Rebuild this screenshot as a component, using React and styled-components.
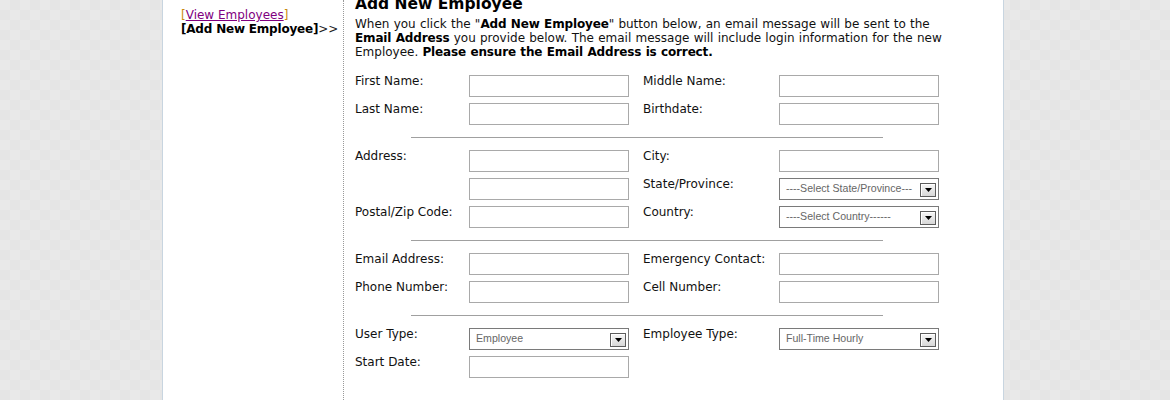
import React from 'react';
import styled, { createGlobalStyle } from 'styled-components';

const GlobalStyle = createGlobalStyle`
  html, body {
    margin: 0;
    padding: 0;
  }

  body {
    background: repeating-conic-gradient(#e5e5e5 0 25%, #e9e9e9 0 50%) 0 0 / 20px 20px;
    font-family: "DejaVu Sans", Verdana, sans-serif;
    font-size: 12px;
    color: #111;
  }
`;

const sections = [
  [
    ['First Name:', 'input', 'Middle Name:', 'input'],
    ['Last Name:', 'input', 'Birthdate:', 'input'],
  ],
  [
    ['Address:', 'input', 'City:', 'input'],
    ['', 'input', 'State/Province:', '----Select State/Province---'],
    ['Postal/Zip Code:', 'input', 'Country:', '----Select Country------'],
  ],
  [
    ['Email Address:', 'input', 'Emergency Contact:', 'input'],
    ['Phone Number:', 'input', 'Cell Number:', 'input'],
  ],
  [
    ['User Type:', 'Employee', 'Employee Type:', 'Full-Time Hourly'],
    ['Start Date:', 'input', '', ''],
  ],
];

function Control({ value }) {
  if (!value) return <span />;
  if (value === 'input') return <TextInput type="text" />;
  return (
    <SelectBox>
      <SelectText>{value}</SelectText>
      <ArrowButton>
        <svg width="7" height="4" viewBox="0 0 7 4">
          <path d="M0 0h7L3.5 4z" fill="#000" />
        </svg>
      </ArrowButton>
    </SelectBox>
  );
}

function App() {
  return (
    <Page>
      <GlobalStyle />
      <Panel>
        <Sidebar>
          <div>
            <Bracket>[</Bracket>
            <NavLink href="#">View Employees</NavLink>
            <Bracket>]</Bracket>
          </div>
          <div>
            <strong>[Add New Employee]</strong>&gt;&gt;
          </div>
        </Sidebar>
        <Main>
          <Heading>Add New Employee</Heading>
          <Intro>
            When you click the "<b>Add New Employee</b>" button below, an email
            message will be sent to the <b>Email Address</b> you provide below.
            The email message will include login information for the new
            Employee. <b>Please ensure the Email Address is correct.</b>
          </Intro>
          <FormGrid>
            {sections.map((rows, i) => (
              <React.Fragment key={i}>
                {i > 0 && <Divider />}
                {rows.map((row, j) => (
                  <React.Fragment key={j}>
                    <Label>{row[0]}</Label>
                    <Control value={row[1]} />
                    <Label $right>{row[2]}</Label>
                    <Control value={row[3]} />
                  </React.Fragment>
                ))}
              </React.Fragment>
            ))}
          </FormGrid>
        </Main>
      </Panel>
    </Page>
  );
}

export default App;

const Page = styled.div`
  min-height: 400px;
  padding-left: 162px;
`;

const Panel = styled.div`
  width: 842px;
  min-height: 400px;
  box-sizing: border-box;
  display: flex;
  background: #fff;
  border-left: 1px solid #c8d5e0;
  border-right: 1px solid #c8d5e0;
`;

const Sidebar = styled.div`
  width: 181px;
  flex-shrink: 0;
  box-sizing: border-box;
  padding: 8px 0 0 18px;
  border-right: 1px dotted #999;
  line-height: 14px;
  color: #222;

  strong {
    color: #000;
    letter-spacing: -0.2px;
  }
`;

const Bracket = styled.span`
  color: #c98a10;
`;

const NavLink = styled.a`
  color: #800080;
  text-decoration: underline;
`;

const Main = styled.div`
  padding-left: 11px;
  margin-top: -5px;
`;

const Heading = styled.h2`
  margin: 0;
  font-size: 15.5px;
  line-height: 18px;
  font-weight: bold;
  color: #000;
`;

const Intro = styled.p`
  margin: 4px 0 0;
  width: 600px;
  line-height: 14px;
  word-spacing: 0.4px;

  b {
    color: #000;
    letter-spacing: -0.15px;
  }
`;

const FormGrid = styled.div`
  margin-top: 16px;
  width: 584px;
  display: grid;
  grid-template-columns: 114px 160px 150px 160px;
  row-gap: 6px;
`;

const Label = styled.span`
  margin-top: -1px;
  line-height: 14px;
  padding-left: ${(p) => (p.$right ? '14px' : '0')};
`;

const TextInput = styled.input`
  width: 160px;
  height: 22px;
  box-sizing: border-box;
  margin: 0;
  padding: 0 3px;
  border: 1px solid #a9a9a9;
  font-family: "DejaVu Sans", Verdana, sans-serif;
  font-size: 12px;
  outline: none;
`;

const SelectBox = styled.div`
  width: 160px;
  height: 22px;
  box-sizing: border-box;
  display: flex;
  align-items: flex-end;
  justify-content: space-between;
  padding: 0 2px 2px 6px;
  border: 1px solid #7a7a7a;
  background: #fff;
`;

const SelectText = styled.span`
  align-self: center;
  font-family: "Liberation Sans", Arial, sans-serif;
  font-size: 10.6px;
  color: #666;
  white-space: nowrap;
`;

const ArrowButton = styled.span`
  width: 16px;
  height: 14px;
  box-sizing: border-box;
  display: flex;
  align-items: center;
  justify-content: center;
  border: 1px solid #5c5c5c;
  background: linear-gradient(#f6f6f6, #d8d8d8);
  box-shadow: inset 1px 1px 0 #fff;
`;

const Divider = styled.hr`
  grid-column: 1 / -1;
  justify-self: center;
  width: 472px;
  height: 0;
  margin: 6px 0;
  border: 0;
  border-top: 1px solid #a0a0a0;
`;
